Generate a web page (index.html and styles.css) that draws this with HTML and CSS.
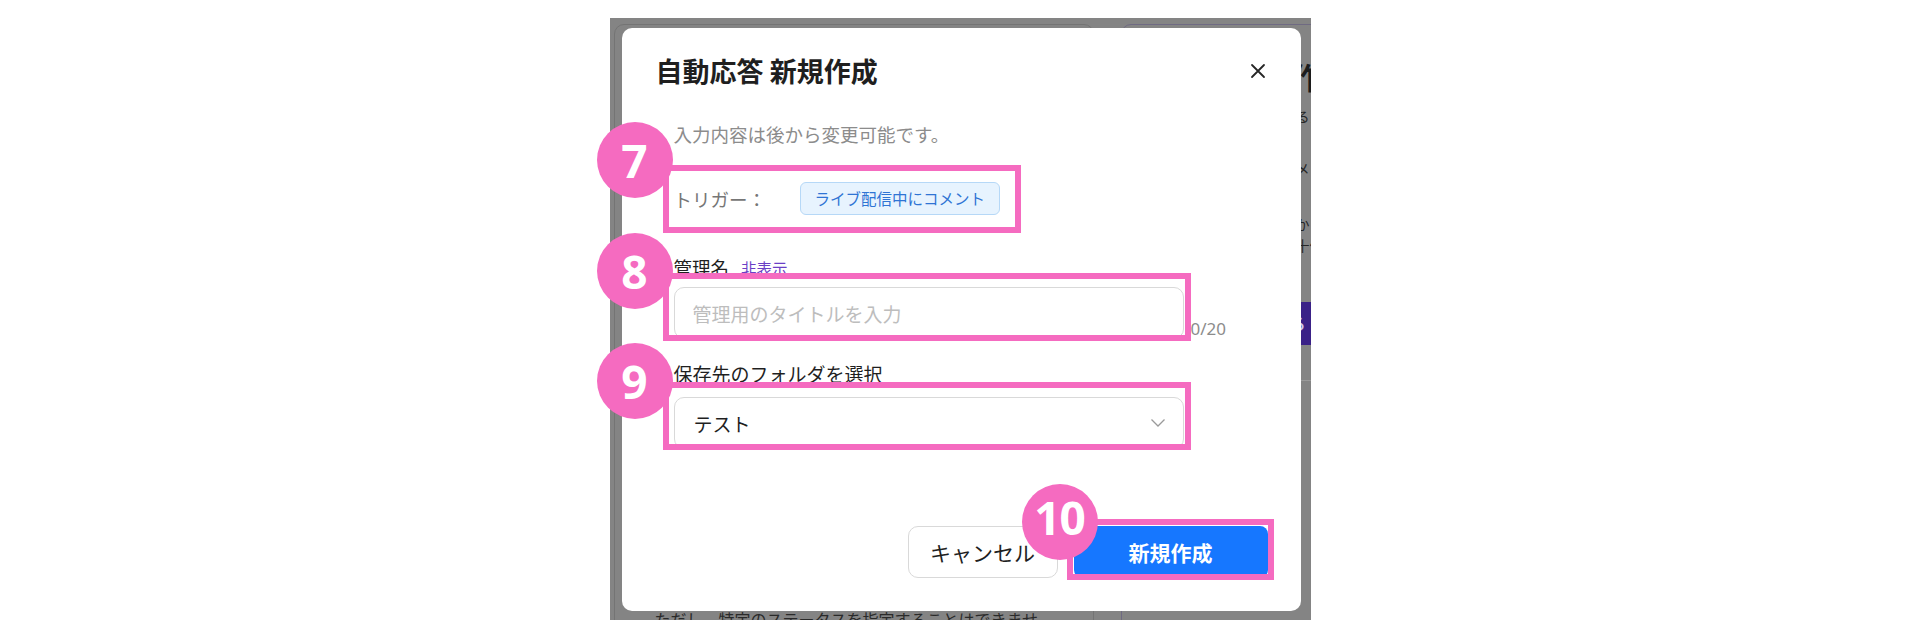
FILE: index.html
```html
<!DOCTYPE html>
<html lang="ja">
<head>
    <meta charset="UTF-8">
    <title>自動応答 新規作成</title>
    <link rel="stylesheet" href="styles.css">
</head>
<body>
    <div class="stage">
        <!-- page behind the mask -->
        <div class="app">
            <section class="card card-main">
                <p class="card-note">ただし、特定のステータスを指定することはできません。</p>
            </section>
            <section class="card card-side">
                <h2 class="side-title">自動応答の作成について</h2>
                <p class="side-line">コメントに自動で返信するメッセージを設定できます。</p>
                <p class="side-line gap-1">トリガーごとに配信するメッセージを選択してください。</p>
                <p class="side-line gap-2">作成した自動応答は一覧からいつでも編集できます。</p>
                <p class="side-line gap-3">アカウントごとに最大二十件まで登録できます。</p>
                <div class="side-btn">使い方ガイドを見る</div>
                <hr class="side-rule">
            </section>
        </div>

        <div class="modal">
            <div class="modal-head">
                <h1 class="modal-title">自動応答 新規作成</h1>
                <button class="modal-close" aria-label="閉じる">
                    <svg width="16" height="16" viewBox="0 0 16 16"><path d="M2 2L14 14M14 2L2 14" stroke="#262626" stroke-width="1.8" stroke-linecap="round"/></svg>
                </button>
            </div>

            <div class="modal-body">
                <p class="hint">入力内容は後から変更可能です。</p>

                <div class="trigger">
                    <span class="trigger-label">トリガー：</span>
                    <span class="chip">ライブ配信中にコメント</span>
                </div>

                <div class="field-label">管理名<a class="toggle">非表示</a></div>
                <div class="field-row">
                    <input class="input" type="text" placeholder="管理用のタイトルを入力">
                    <span class="count">0/20</span>
                </div>

                <div class="field-label label-folder">保存先のフォルダを選択</div>
                <div class="select">
                    <span>テスト</span>
                    <svg width="16" height="10" viewBox="0 0 16 10"><path d="M1.5 1.5L8 8L14.5 1.5" fill="none" stroke="#9a9a9a" stroke-width="1.3"/></svg>
                </div>
            </div>

            <div class="modal-foot">
                <button class="btn btn-cancel">キャンセル</button>
                <button class="btn btn-primary">新規作成</button>
            </div>
        </div>

        <!-- annotations -->
        <div class="mark box-7"></div>
        <div class="mark box-8"></div>
        <div class="mark box-9"></div>
        <div class="mark box-10"></div>
        <div class="badge badge-7">7</div>
        <div class="badge badge-8">8</div>
        <div class="badge badge-9">9</div>
        <div class="badge badge-10">10</div>
    </div>
</body>
</html>
```

FILE: styles.css
```css
:root {
    --mask: #848484;
    --pink: #f56bc0;
    --blue: #1677ff;
    --text: #1f1f1f;
    --border: #d9d9d9;
}

body {
    margin: 0;
    background: #fff;
    font-family: "Noto Sans CJK JP", "Noto Sans", sans-serif;
    color: var(--text);
}

.stage {
    position: relative;
    width: 701px;
    height: 602px;
    margin: 18px auto 0;
    background: var(--mask);
}

/* background page */
.app {
    height: 100%;
    overflow: hidden;
    display: flex;
    gap: 27px;
    padding: 6px 0 0 4px;
    box-sizing: border-box;
}

.card {
    flex: none;
    height: 640px;
    border: 1px solid #747474;
    border-radius: 10px;
    box-sizing: border-box;
}

.card-main {
    width: 480px;
    padding: 584px 0 0 40px;
}

.card-note {
    width: 395px;
    margin: 0;
    font-size: 16px;
    line-height: 20px;
    color: #2a2a2a;
}

.card-side {
    width: 260px;
    padding: 31px 0 0 20px;
    border-color: #6f6a82;
}

.side-title {
    margin: 0;
    font-size: 30px;
    line-height: 40px;
    font-weight: 700;
    color: #1c1c1c;
    white-space: nowrap;
}

.side-line {
    margin: 10px 0 0;
    font-size: 14px;
    line-height: 20px;
    color: #262626;
    white-space: nowrap;
}

.side-line.gap-1 { margin-top: 32px; }
.side-line.gap-2 { margin-top: 36px; }
.side-line.gap-3 { margin-top: 1px; }

.side-btn {
    margin-top: 47px;
    width: 230px;
    height: 43px;
    line-height: 43px;
    padding-left: 20px;
    background: #3a2187;
    color: #cfc8e6;
    font-size: 16px;
    font-weight: 700;
    white-space: nowrap;
    border-radius: 6px;
}

.side-rule {
    margin: 35px 0 0 -20px;
    border: none;
    border-top: 1px solid #9a9a9a;
}

/* modal */
.modal {
    position: absolute;
    left: 12px;
    top: 10px;
    width: 679px;
    height: 583px;
    background: #fff;
    border-radius: 10px;
    display: flex;
    flex-direction: column;
    box-sizing: border-box;
}

.modal-head {
    display: flex;
    justify-content: space-between;
    align-items: center;
    padding: 25px 31px 0 34px;
}

.modal-title {
    margin: 0;
    font-size: 27px;
    line-height: 36px;
    font-weight: 700;
    color: var(--text);
}

.modal-close {
    width: 24px;
    height: 24px;
    padding: 0;
    border: none;
    background: none;
    display: flex;
    align-items: center;
    justify-content: center;
}

.modal-body {
    padding-left: 52px;
}

.hint {
    margin: 32px 0 0;
    font-size: 18.5px;
    line-height: 26px;
    color: #8c8c8c;
}

.trigger {
    display: flex;
    align-items: center;
    margin-top: 35px;
}

.trigger-label {
    width: 126px;
    font-size: 18.5px;
    color: #767676;
}

.chip {
    padding: 0 14px;
    font-size: 15.5px;
    line-height: 31px;
    color: #2f74d4;
    background: #e7f3fe;
    border: 1px solid #b6d8f7;
    border-radius: 6px;
}

.field-label {
    margin-top: 39px;
    font-size: 18.5px;
    line-height: 26px;
    color: var(--text);
}

.field-label.label-folder {
    margin-top: 22px;
    font-size: 19px;
}

.toggle {
    margin-left: 12px;
    font-size: 15.5px;
    color: #6b3fc6;
}

.field-row {
    display: flex;
    align-items: flex-end;
    margin-top: 6px;
}

.input {
    width: 510px;
    height: 52px;
    padding: 0 18px;
    border: 1px solid var(--border);
    border-radius: 10px;
    box-sizing: border-box;
    font-family: inherit;
    font-size: 19px;
    outline: none;
}

.input::placeholder {
    color: #bdbdbd;
}

.count {
    margin-left: 7px;
    font-family: "Noto Sans", sans-serif;
    font-size: 17px;
    line-height: 20px;
    color: #8c8c8c;
}

.select {
    width: 510px;
    height: 52px;
    margin-top: 10px;
    padding: 0 17px 0 19px;
    display: flex;
    align-items: center;
    justify-content: space-between;
    border: 1px solid var(--border);
    border-radius: 10px;
    box-sizing: border-box;
    font-size: 19px;
}

.modal-foot {
    margin-top: auto;
    display: flex;
    justify-content: flex-end;
    gap: 16px;
    padding: 0 33px 33px;
}

.btn {
    height: 52px;
    border: 1px solid var(--border);
    border-radius: 10px;
    background: #fff;
    font-family: inherit;
    font-size: 21px;
    color: var(--text);
}

.btn-cancel {
    width: 150px;
}

.btn-primary {
    width: 194px;
    border: none;
    border-radius: 8px;
    background: var(--blue);
    color: #fff;
    font-weight: 700;
}

/* annotations */
.mark {
    position: absolute;
    border: 6px solid var(--pink);
    box-sizing: border-box;
}

.box-7 { left: 53px; top: 147px; width: 358px; height: 68px; }
.box-8 { left: 53px; top: 255px; width: 528px; height: 68px; }
.box-9 { left: 53px; top: 364px; width: 528px; height: 68px; }
.box-10 { left: 457px; top: 501px; width: 207px; height: 61px; }

.badge {
    position: absolute;
    left: -13px;
    width: 76px;
    height: 76px;
    border-radius: 50%;
    background: var(--pink);
    color: #fff;
    font-family: "Noto Sans", sans-serif;
    font-size: 46px;
    font-weight: 700;
    line-height: 76px;
    text-align: center;
}

.badge-7 { top: 104px; }
.badge-8 { top: 215px; }
.badge-9 { top: 325px; }
.badge-10 { left: 412px; top: 466px; line-height: 66px; letter-spacing: -1px; }
```
